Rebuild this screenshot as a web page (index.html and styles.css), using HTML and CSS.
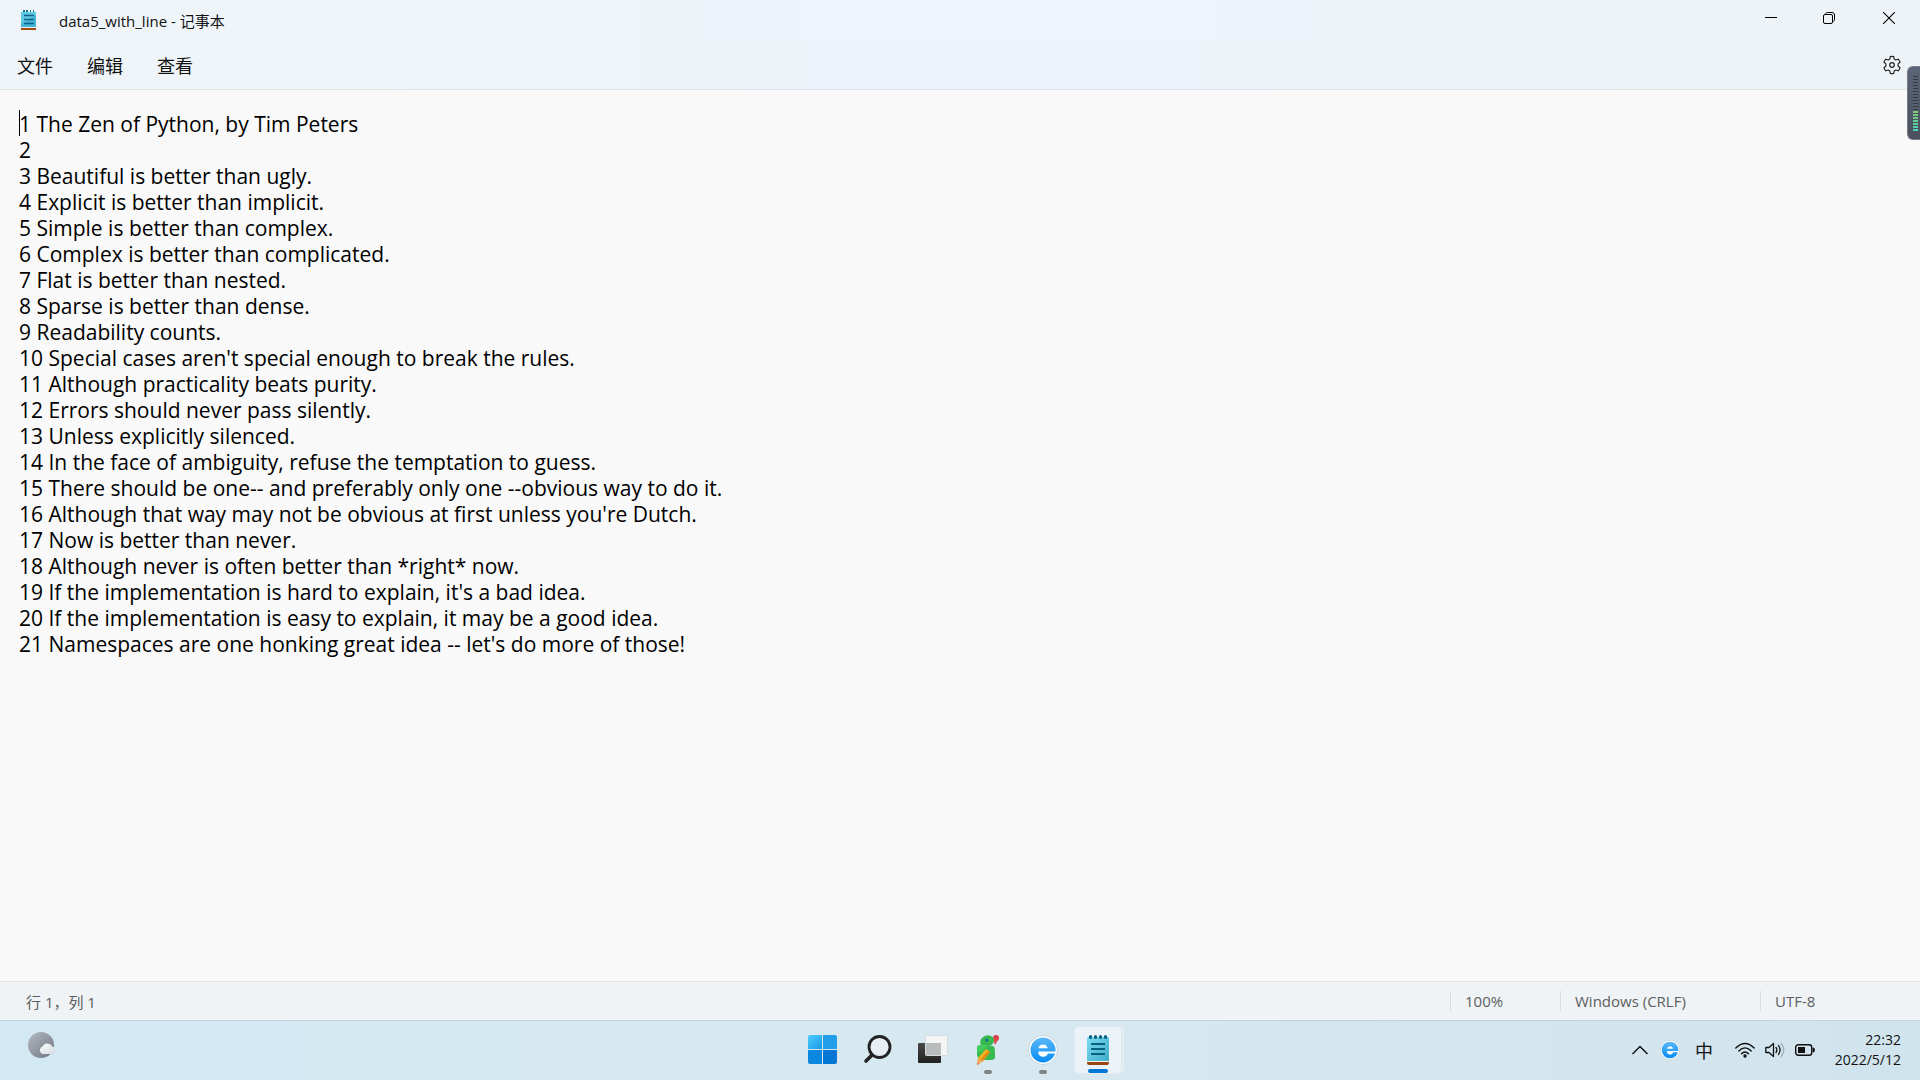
FILE: index.html
```html
<!DOCTYPE html>
<html lang="zh">
<head>
    <meta charset="UTF-8">
    <meta name="viewport" content="width=device-width,initial-scale=1">
    <title>data5_with_line - 记事本</title>
    <link rel="stylesheet" href="styles.css">
</head>
<body>
    <main class="window">
        <header class="title-bar">
            <svg class="app-icon" viewBox="0 0 16 20">
                <rect x="0" y="2" width="15" height="16" fill="#5fc9e3"/>
                <path d="M0 14L15 5v13H0z" fill="#46b4d6"/>
                <path d="M2 0h2v2H2zM5 0h2v2H5zM9 0h1v2H9zM12 0h1v2h-1z" fill="#0f6f93"/>
                <path d="M3 5.500h10M3 9.500h10M3 13.500h10" stroke="#0b6287" stroke-width="1.500"/>
                <rect x="0" y="17" width="15" height="1" fill="#e8f4f8"/>
                <rect x="0" y="18" width="15" height="2" fill="#a04a12"/>
            </svg>
            <h1 class="title">data5_with_line - 记事本</h1>
            <div class="window-buttons">
                <button class="window-button" aria-label="最小化">
                    <svg width="12" height="12" viewBox="0 0 12 12"><path d="M0 5.500h12" stroke="#000"/></svg>
                </button>
                <button class="window-button" aria-label="还原">
                    <svg width="12" height="12" viewBox="0 0 12 12" fill="none" stroke="#000"><rect x=".5" y="2.500" width="9" height="9" rx="1.500"/><path d="M2.500 1.800Q3 .5 4.500 .5H9Q11.500 .5 11.500 3v4.500Q11.500 9 10.300 9.500"/></svg>
                </button>
                <button class="window-button" aria-label="关闭">
                    <svg width="12" height="12" viewBox="0 0 12 12"><path d="M0 0l12 12M12 0L0 12" stroke="#000" stroke-width="1.100"/></svg>
                </button>
            </div>
        </header>
        <nav class="menu-bar">
            <button class="menu-item">文件</button>
            <button class="menu-item">编辑</button>
            <button class="menu-item">查看</button>
            <button class="settings-button" aria-label="设置">
                <svg width="20" height="20" viewBox="0 0 20 20" fill="none" stroke="#222" stroke-width="1.200" stroke-linejoin="round">
                    <path d="M8.300 1.600Q10 1.100 11.700 1.600L12.200 4.100L13.700 5L16.200 4.200Q17.500 5.500 18 7.200L16.100 8.900V11.100L18 12.800Q17.500 14.500 16.200 15.800L13.700 15L12.200 15.900L11.700 18.400Q10 18.900 8.300 18.400L7.800 15.900L6.300 15L3.800 15.800Q2.500 14.500 2 12.800L3.900 11.100V8.900L2 7.200Q2.500 5.500 3.800 4.200L6.300 5L7.800 4.100z"/>
                    <circle cx="10" cy="10" r="2.300"/>
                </svg>
            </button>
        </nav>
        <div class="editor-wrap">
            <textarea class="editor" aria-label="文本编辑器" spellcheck="false">1 The Zen of Python, by Tim Peters
2
3 Beautiful is better than ugly.
4 Explicit is better than implicit.
5 Simple is better than complex.
6 Complex is better than complicated.
7 Flat is better than nested.
8 Sparse is better than dense.
9 Readability counts.
10 Special cases aren't special enough to break the rules.
11 Although practicality beats purity.
12 Errors should never pass silently.
13 Unless explicitly silenced.
14 In the face of ambiguity, refuse the temptation to guess.
15 There should be one-- and preferably only one --obvious way to do it.
16 Although that way may not be obvious at first unless you're Dutch.
17 Now is better than never.
18 Although never is often better than *right* now.
19 If the implementation is hard to explain, it's a bad idea.
20 If the implementation is easy to explain, it may be a good idea.
21 Namespaces are one honking great idea -- let's do more of those!</textarea>
            <span class="caret"></span>
        </div>
        <footer class="status-bar">
            <span class="status-position">行 1，列 1</span>
            <span class="status-cell zoom-level">100%</span>
            <span class="status-cell line-ending">Windows (CRLF)</span>
            <span class="status-cell encoding">UTF-8</span>
        </footer>
    </main>

    <!-- 音量电平小挂件 -->
    <aside class="level-meter">
        <span class="level-off"></span>
        <span class="level-on"></span>
    </aside>

    <svg class="defs" width="0" height="0">
        <defs>
            <linearGradient id="blue" x1="0" y1="0" x2="1" y2="1"><stop offset="0" stop-color="#4ccfff"/><stop offset="1" stop-color="#1a96e6"/></linearGradient>
            <linearGradient id="ie" x1="0" y1="0" x2="0" y2="1"><stop offset="0" stop-color="#5ab8f8"/><stop offset="1" stop-color="#078cf6"/></linearGradient>
            <linearGradient id="moon" x1="0" y1="0" x2="1" y2="1"><stop offset="0" stop-color="#b3bac4"/><stop offset="1" stop-color="#6f7680"/></linearGradient>
            <linearGradient id="cloud" x1="0" y1="0" x2="1" y2="1"><stop offset="0" stop-color="#fff"/><stop offset="1" stop-color="#d3d9df"/></linearGradient>
            <linearGradient id="dark" x1="0" y1="0" x2="0" y2="1"><stop offset="0" stop-color="#484848"/><stop offset="1" stop-color="#222"/></linearGradient>
            <linearGradient id="pad" x1="0" y1="0" x2="1" y2="1"><stop offset="0" stop-color="#7ddcf0"/><stop offset="1" stop-color="#3fabc9"/></linearGradient>
            <symbol id="browser" viewBox="0 0 30 30">
                <circle cx="15" cy="15" r="14.500" fill="#fff" stroke="#b5c6d2" stroke-width=".7"/>
                <circle cx="15" cy="15" r="12.500" fill="url(#ie)"/>
                <path d="M10.300 13.300A4.800 4.800 0 0 1 19.700 13.300z" fill="#fff"/>
                <path d="M10.300 16.500H28V18.500H19.800A4.900 4.900 0 0 1 10.300 16.500z" fill="#fff"/>
            </symbol>
        </defs>
    </svg>

    <footer class="taskbar">
        <button class="weather" aria-label="天气">
            <svg width="28" height="28" viewBox="0 0 28 28">
                <circle cx="13" cy="13" r="13" fill="url(#moon)"/>
                <path d="M15 22a3.800 3.800 0 0 1-.5-7.300 5.500 5.500 0 0 1 9.800-.3A4 4 0 0 1 24.500 22z" fill="url(#cloud)"/>
            </svg>
        </button>
        <div class="task-apps">
            <button class="task-app" aria-label="开始">
                <svg width="30" height="30" viewBox="0 0 30 30">
                    <path d="M2 0H14V14H0V2Q0 0 2 0z" fill="url(#blue)"/>
                    <path d="M15 0H27Q29 0 29 2V14H15z" fill="#229de8"/>
                    <path d="M0 15H14V29H2Q0 29 0 27z" fill="#0b87df"/>
                    <path d="M15 15H29V27Q29 29 27 29H15z" fill="#0476d4"/>
                </svg>
            </button>
            <button class="task-app" aria-label="搜索">
                <svg width="30" height="30" viewBox="0 0 30 30" fill="none" stroke="#222" stroke-linecap="round">
                    <circle cx="16.500" cy="12" r="10.500" fill="#e7eff4" stroke-width="2.800"/>
                    <path d="M9 20L3 26" stroke-width="3.600"/>
                </svg>
            </button>
            <button class="task-app" aria-label="任务视图">
                <svg width="30" height="30" viewBox="0 0 30 30">
                    <rect x="0" y="8" width="23" height="20" rx="1" fill="url(#dark)"/>
                    <rect x="7.500" y=".5" width="22" height="20" rx="1" fill="#f5f5f5" stroke="#d5dade"/>
                    <rect x="8" y="8" width="15" height="12" fill="#b9bcbd"/>
                </svg>
            </button>
            <button class="task-app" aria-label="编辑器">
                <svg width="30" height="30" viewBox="0 0 30 30">
                    <circle cx="23" cy="3" r="3" fill="#dc3f48"/>
                    <path d="M20 4L25 5L22 10z" fill="#e14b4d"/>
                    <path d="M9 3Q13-1 18 1Q21 2 21 6Q20 11 15 11H20Q22 12 22 17V22Q22 25 18 25H8Q4 24 4 18V13Q4 10 8 10Q6 6 9 3z" fill="#38b94f"/>
                    <path d="M4 14Q4 10 7 10H15Q11 16 4 18z" fill="#46cc5c"/>
                    <circle cx="13.800" cy="5" r="1.600" fill="#176b96"/>
                    <path d="M13 14L17 17L10 26L4 30L5 23z" fill="#f5b51c"/>
                    <path d="M15 15.500L17 17L10 26L7.500 24.500z" fill="#e58a18"/>
                    <path d="M5 23L10 26L4 30z" fill="#f3a75c"/>
                    <path d="M4.500 28L6 28.800L4 30z" fill="#a65a36"/>
                </svg>
                <span class="indicator"></span>
            </button>
            <button class="task-app" aria-label="浏览器">
                <svg width="30" height="30"><use href="#browser"/></svg>
                <span class="indicator"></span>
            </button>
            <button class="task-app active" aria-label="记事本">
                <svg width="30" height="30" viewBox="0 0 30 30">
                    <rect x="4" y="2" width="22" height="25" rx="1" fill="url(#pad)"/>
                    <path d="M7.500 1.500v1M12.500 1.500v1M17.500 1.500v1M22.500 1.500v1" stroke="#075f82" stroke-width="3" stroke-linecap="round"/>
                    <path d="M8 9h14M8 14h14M8 19h14" stroke="#07617f" stroke-width="1.800"/>
                    <rect x="4" y="26" width="22" height="1" fill="#f2f2ee"/>
                    <path d="M4 27H26V28Q26 30 24 30H6Q4 30 4 28z" fill="#984711"/>
                </svg>
                <span class="indicator"></span>
            </button>
        </div>
        <div class="tray">
            <button class="tray-button" aria-label="显示隐藏的图标">
                <svg width="16" height="16" viewBox="0 0 16 16" fill="none" stroke="#111" stroke-width="1.500"><path d="M.5 12L8 4.500L15.500 12"/></svg>
            </button>
            <button class="tray-button" aria-label="浏览器">
                <svg width="20" height="20"><use href="#browser"/></svg>
            </button>
            <button class="tray-button input-mode">中</button>
            <button class="tray-button quick-settings" aria-label="网络、音量和电池">
                <svg width="20" height="16" viewBox="0 0 20 16" fill="none" stroke="#111" stroke-width="1.400" stroke-linecap="round">
                    <path d="M.8 6Q10-3 19.200 6M3.800 9Q10 2.700 16.200 9M6.500 11.800Q10 8.300 13.500 11.800"/>
                    <circle cx="10" cy="14" r="1" fill="#111"/>
                </svg>
                <svg width="20" height="16" viewBox="0 0 20 16" fill="none" stroke="#111" stroke-width="1.300" stroke-linecap="round" stroke-linejoin="round">
                    <path d="M.8 5.500H4L8.500 1.500V14.500L4 10.500H.8z"/>
                    <path d="M11 5.500Q12.800 8 11 10.500M13.500 3.500Q16.600 8 13.500 12.500"/>
                    <path d="M16.300 1.500Q21.300 8 16.300 14.500" stroke="#9eaeb8"/>
                </svg>
                <svg width="20" height="14" viewBox="0 0 20 14">
                    <rect x=".7" y="1.700" width="16" height="10.600" rx="2.500" fill="none" stroke="#111" stroke-width="1.400"/>
                    <rect x="3" y="4" width="7" height="6" fill="#111"/>
                    <path d="M18 5h1Q20 7 19 9h-1z" fill="#111" stroke="#111" stroke-width=".8"/>
                </svg>
            </button>
            <button class="clock"><time>22:32</time><time>2022/5/12</time></button>
        </div>
    </footer>
</body>
</html>
```
FILE: styles.css
```css
* {
    box-sizing: border-box;
}
body {
    display: flex;
    flex-direction: column;
    height: 100vh;
    margin: 0;
    overflow: hidden;
    font-family: "Open Sans", "Noto Sans CJK SC", sans-serif;
    color: #111;
}
button {
    display: flex;
    align-items: center;
    justify-content: center;
    margin: 0;
    padding: 0;
    border: none;
    background: none;
    font: inherit;
    color: inherit;
}
svg {
    display: block;
    flex: none;
}
.defs {
    position: absolute;
}
.window {
    display: flex;
    flex: 1;
    flex-direction: column;
    min-height: 0;
    background: #f9f9f9;
}
.title-bar {
    display: flex;
    align-items: center;
    height: 40px;
    padding-left: 21px;
    background: linear-gradient(90deg, #eef4f8 20%, #eef3fc 45%, #eef3fc 60%, #eef3f8 85%);
}
.app-icon {
    width: 16px;
    height: 20px;
}
.title {
    margin: 0 0 0 22px;
    font-size: 15px;
    font-weight: 400;
}
.window-buttons {
    display: flex;
    align-self: flex-start;
    margin-left: auto;
}
.window-button {
    width: 58px;
    height: 36px;
}
.window-button:last-child {
    width: 62px;
}
.menu-bar {
    display: flex;
    align-items: center;
    height: 50px;
    padding-right: 12px;
    border-bottom: 1px solid #dfe6ea;
    background: linear-gradient(90deg, #eef4f8 20%, #eef3fb 45%, #eef3fb 60%, #eef3f8 85%);
}
.menu-item {
    width: 70px;
    height: 36px;
    font-family: "Noto Sans CJK SC", sans-serif;
    font-size: 18px;
}
.settings-button {
    width: 32px;
    margin-left: auto;
}
.editor-wrap {
    position: relative;
    display: flex;
    flex: 1;
    min-height: 0;
}
.editor {
    flex: 1;
    padding: 21px 19px;
    border: none;
    outline: none;
    resize: none;
    background: transparent;
    color: #000;
    font-family: "Open Sans", sans-serif;
    font-size: 21px;
    line-height: 26px;
}
.caret {
    position: absolute;
    top: 20px;
    left: 19px;
    width: 1px;
    height: 26px;
    background: #000;
}
.status-bar {
    display: flex;
    align-items: center;
    height: 39px;
    border-top: 1px solid #dfe4e7;
    background: #eff3f5;
    font-size: 15px;
    color: #5c5e60;
}
.status-position {
    flex: 1;
    padding-left: 26px;
}
.status-cell {
    height: 20px;
    padding-left: 14px;
    border-left: 1px solid #d7dbde;
    line-height: 20px;
}
.zoom-level {
    width: 110px;
}
.line-ending {
    width: 200px;
}
.encoding {
    width: 160px;
}
.level-meter {
    position: absolute;
    top: 66px;
    right: 0;
    display: flex;
    flex-direction: column;
    width: 13px;
    height: 74px;
    padding: 9px 2px 8px 5px;
    border: 1px solid #747c87;
    border-right: none;
    border-radius: 6px 0 0 6px;
    background: linear-gradient(#5c6578, #4a505c);
}
.level-off {
    flex: 1;
    background: repeating-linear-gradient(#343946 0 1px, #596171 1px 3px);
}
.level-on {
    height: 20px;
    background: repeating-linear-gradient(transparent 0 2px, #4a505c 2px 3px), linear-gradient(#83c873, #46d5ba);
}
.taskbar {
    display: grid;
    grid-template-columns: 1fr auto 1fr;
    height: 60px;
    border-top: 1px solid #c2d5e1;
    background: linear-gradient(90deg, #d2e8f3, #d7e8f0 50%, #d5e5ee 80%, #d0e4ed);
}
.weather {
    align-self: start;
    justify-self: start;
    margin: 11px 0 0 28px;
}
.task-apps {
    display: flex;
    align-items: center;
    gap: 7px;
    padding-bottom: 1px;
}
.task-app {
    position: relative;
    width: 48px;
    height: 48px;
}
.active {
    border: 1px solid #dfe8ef;
    border-radius: 5px;
    background: #ebf3f8;
    box-shadow: 2px 0 0 #e2edf4;
}
.indicator {
    position: absolute;
    bottom: 0;
    width: 8px;
    height: 4px;
    border-radius: 2px;
    background: #7d8488;
}
.active .indicator {
    width: 20px;
    background: #0078d4;
}
.tray {
    display: flex;
    align-items: center;
    justify-content: flex-end;
    padding: 0 19px 2px 0;
}
.tray-button {
    width: 30px;
    height: 40px;
}
.input-mode {
    width: 38px;
    font-size: 18px;
}
.quick-settings {
    gap: 10px;
    width: 104px;
}
.clock {
    flex-direction: column;
    align-items: flex-end;
    width: 74px;
    font-size: 14px;
    line-height: 20px;
}
```
